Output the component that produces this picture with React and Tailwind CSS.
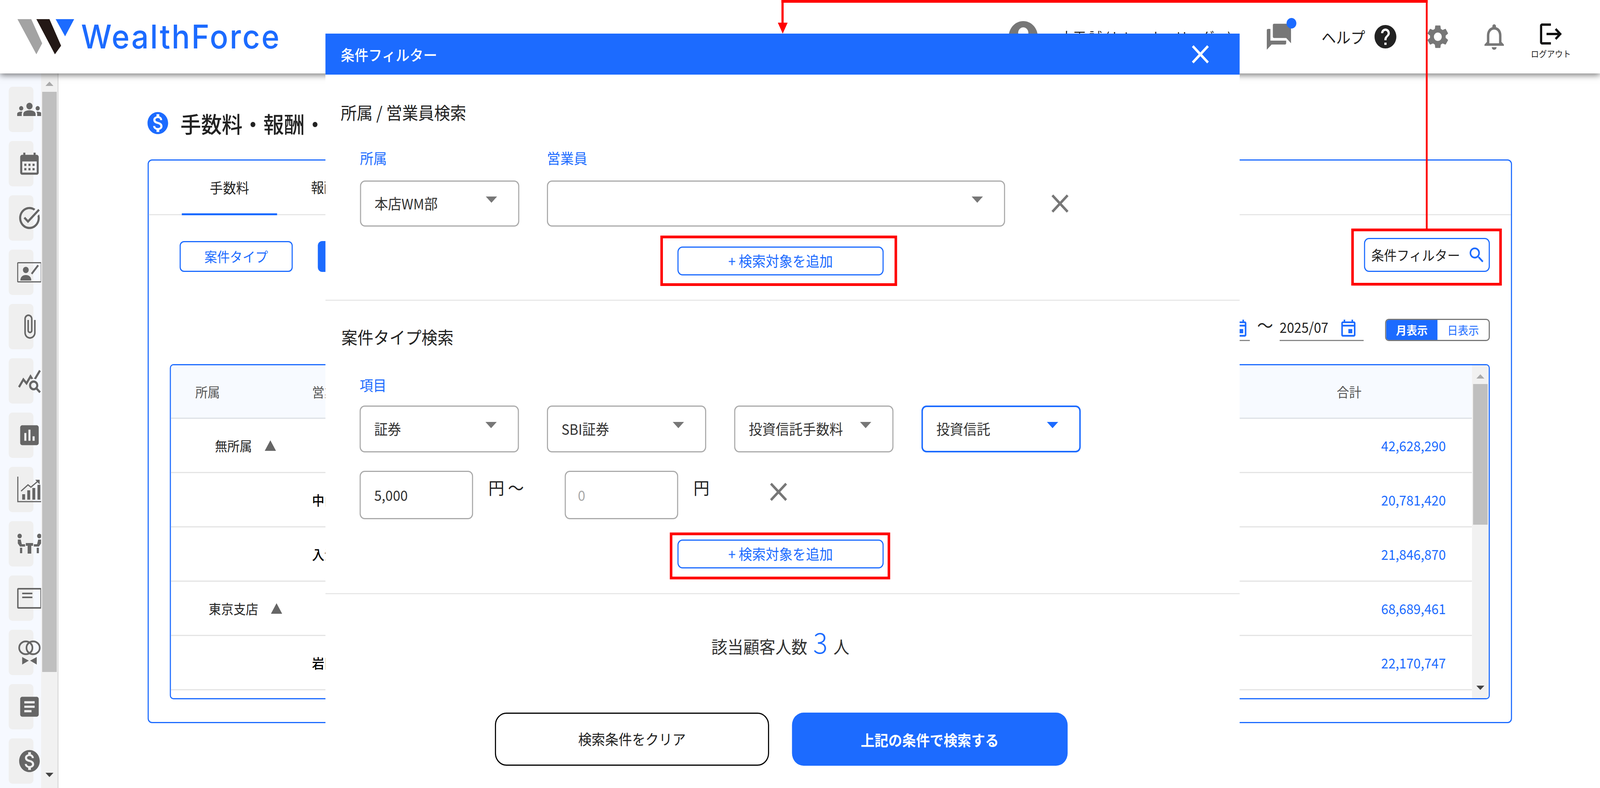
import React from "react";
import {
  MdGroups, MdCalendarMonth, MdOutlineTaskAlt, MdAttachFile, MdQueryStats, MdAssessment,
  MdArticle, MdMonetizationOn, MdClose, MdAccountCircle, MdForum, MdHelp, MdSettings,
  MdOutlineNotifications, MdLogout, MdSearch, MdOutlineEvent,
} from "react-icons/md";

const ContactPen = () => (
  <svg viewBox="0 0 68 52" className="w-[68px] h-[52px] flex-none" fill="none">
    <rect x="1.5" y="1.5" width="65" height="49" stroke="#666" strokeWidth="3" rx="2" />
    <circle cx="24" cy="20" r="8" fill="#666" />
    <path d="M9 47c0-10 7-14 15-14s15 4 15 14z" fill="#666" />
    <path d="M40 30 58 8" stroke="#666" strokeWidth="5" />
  </svg>
);
const TrendChart = () => (
  <svg viewBox="0 0 68 68" className="w-[68px] h-[68px] flex-none" fill="none">
    <path d="M2 1v64h66" stroke="#666" strokeWidth="3" />
    <path d="M14 60V46h8v14zM28 60V36h8v24zM42 60V30h8v30zM56 60V22h8v38z" fill="#666" />
    <path d="M11 38 30 22l8 6 20-16" stroke="#666" strokeWidth="3" />
    <path d="M50 9h12v12z" fill="#666" />
  </svg>
);
const Meeting = () => (
  <svg viewBox="0 0 68 52" className="w-[68px] h-[52px] flex-none" fill="#666">
    <circle cx="7" cy="6" r="6" />
    <circle cx="61" cy="6" r="6" />
    <path d="M2 15h8l3 12h9v6H8l-6-8zM66 15h-8l-3 12h-9v6h14l6-8z" />
    <path d="M24 24h20v7h-5v20H29V31h-5z" />
    <path d="M8 36h6v14H8zM54 36h6v14h-6z" />
  </svg>
);
const CardLines = () => (
  <svg viewBox="0 0 68 56" className="w-[68px] h-[56px] flex-none" fill="none" stroke="#666">
    <rect x="2" y="4" width="64" height="49" strokeWidth="4" rx="2" />
    <path d="M14 16h28M14 26h28" strokeWidth="4" />
  </svg>
);
const Rings = () => (
  <svg viewBox="0 0 68 70" className="w-[62px] h-[70px] flex-none" fill="none" stroke="#666">
    <ellipse cx="23" cy="22" rx="20" ry="18" strokeWidth="5" />
    <ellipse cx="45" cy="22" rx="20" ry="18" strokeWidth="5" />
    <path d="M12 48l20 10-20 11zM56 48 36 58l20 11z" fill="#666" stroke="none" />
  </svg>
);

const sideIcons = [
  <MdGroups size={68} className="flex-none" />,
  <MdCalendarMonth size={68} className="flex-none" />,
  <MdOutlineTaskAlt size={68} className="flex-none" />,
  <ContactPen />,
  <MdAttachFile size={68} className="flex-none" />,
  <MdQueryStats size={68} className="flex-none" />,
  <MdAssessment size={68} className="flex-none" />,
  <TrendChart />,
  <Meeting />,
  <CardLines />,
  <Rings />,
  <MdArticle size={68} className="flex-none" />,
  <MdMonetizationOn size={68} className="flex-none" />,
];

const rows = [
  { a: "無所属", pad: "pl-[121px]", b: "", v: "42,628,290", group: true },
  { a: "", b: "中山", v: "20,781,420" },
  { a: "", b: "入江", v: "21,846,870" },
  { a: "東京支店", pad: "pl-[104px]", b: "", v: "68,689,461", group: true },
  { a: "", b: "岩田", v: "22,170,747" },
];

const Tri = ({ up, color = "#777", className = "" }) => (
  <svg viewBox="0 0 32 16" preserveAspectRatio="none" className={`flex-none ${className}`}>
    <polygon points={up ? "16,0 32,16 0,16" : "0,0 32,0 16,16"} fill={color} />
  </svg>
);

const Select = ({ w = "w-[438px]", h = "h-[120px]", active, children }) => (
  <div
    className={`${w} ${h} flex-none flex items-center justify-between pl-[37px] pr-[58px] bg-white rounded-[14px] ${
      active ? "border-[4px] border-[#1c6bff]" : "border-[3px] border-[#aaaaaa]"
    }`}
  >
    <span className="text-[37px] text-[#333] whitespace-nowrap">{children}</span>
    <Tri color={active ? "#1c6bff" : "#777"} className="w-[31px] h-[16px] -mt-[20px]" />
  </div>
);

const AddButton = ({ ring }) => (
  <div className="relative ml-[968px] w-[567px] h-[74px] flex items-center justify-center rounded-[14px] border-[3px] border-[#1c6bff] text-[#1c6bff] text-[37px]">
    + 検索対象を追加
    <div className={`absolute border-[7px] border-[#ff0000] pointer-events-none ${ring}`} />
  </div>
);

const Line = ({ className }) => <div className={`absolute bg-[#ff0000] ${className}`} />;

export default function App() {
  return (
    <div className="relative w-[4400px] h-[2017px] overflow-hidden origin-top-left scale-x-[0.930909] bg-white text-[#222] font-['Noto_Sans_CJK_JP','Noto_Sans',sans-serif]">
      {/* header */}
      <header className="relative z-10 h-[188px] bg-white flex items-center pl-[48px] shadow-[0_4px_16px_rgba(0,0,0,0.55)]">
        <svg viewBox="0 0 156 90" className="w-[156px] h-[90px] flex-none">
          <polygon points="0,0 38,0 68,62 52,90" fill="#a3a3a3" />
          <polygon points="52,0 88,0 120,68 103,90" fill="#231815" />
          <polygon points="105,0 156,0 131,44" fill="#1c6bff" />
        </svg>
        <span className="ml-[19px] text-[#1c6bff] text-[84px] leading-none tracking-[4px] font-['Inter',sans-serif] font-medium">
          WealthForce
        </span>
        <div className="ml-auto flex items-center">
          <MdAccountCircle size={96} color="#777" className="flex-none" />
          <span className="ml-[53px] w-[482px] text-[36px] whitespace-nowrap">大平 誠 (トレーナーリーダー)</span>
          <div className="relative ml-[80px]">
            <MdForum size={80} color="#777" className="-scale-x-100" />
            <div className="absolute right-[-8px] top-[-8px] w-[27px] h-[27px] rounded-full bg-[#1c6bff]" />
          </div>
          <span className="ml-[77px] w-[126px] text-[40px] whitespace-nowrap">ヘルプ</span>
          <MdHelp size={72} color="#222" className="ml-[14px]" />
          <MdSettings size={72} color="#777" className="ml-[72px]" />
          <MdOutlineNotifications size={80} color="#777" className="ml-[79px]" />
          <div className="ml-[59px] mr-[78px] w-[114px] flex flex-col items-center mt-[14px]">
            <MdLogout size={72} color="#111" />
            <span className="text-[22px] leading-[30px] whitespace-nowrap mt-[-2px]">ログアウト</span>
          </div>
        </div>
      </header>

      <div className="flex h-[1829px]">
        {/* sidebar */}
        <aside className="w-[161px] flex-none flex border-r-[3px] border-[#dddddd] bg-[#f1f1f1]">
          <div className="w-[113px] flex-none bg-[#f6f9ff] pt-[34px] pl-[24px] flex flex-col gap-[23px] overflow-hidden">
            {sideIcons.map((ic, i) => (
              <div key={i} className="w-[68px] h-[116px] flex-none rounded-[10px] bg-[#efefef] flex items-center justify-center text-[#666] overflow-visible">
                <div className="w-[68px] flex-none flex justify-center ml-[46px]">{ic}</div>
              </div>
            ))}
          </div>
          <div className="flex-1 flex flex-col items-center">
            <Tri up color="#aaa" className="w-[22px] h-[11px] mt-[21px]" />
            <div className="w-[40px] h-[1485px] mt-[15px] bg-[#bfbfbf]" />
            <Tri color="#444" className="w-[22px] h-[11px] mt-[258px]" />
          </div>
        </aside>

        {/* main */}
        <main className="flex-1 pl-[245px] pt-[98px]">
          <div className="flex items-center h-[58px]">
            <MdMonetizationOn size={68} color="#1c6bff" className="-ml-[6px]" />
            <h1 className="ml-[28px] text-[57px] font-medium leading-none whitespace-nowrap text-[#222]">手数料・報酬・</h1>
          </div>
          <section className="mt-[64px] w-[3752px] h-[1443px] border-[3px] border-[#1c6bff] rounded-[12px] px-[58px]">
            <div className="-mx-[58px] h-[140px] border-b-[3px] border-[#e6e6e6] pl-[91px] flex items-end">
              <div className="w-[262px] h-[140px] -mb-[3px] border-b-[5px] border-[#1c6bff] flex items-center justify-center text-[36px]">手数料</div>
              <div className="ml-[93px] h-[140px] flex items-center text-[36px]">報酬</div>
            </div>
            <div className="mt-[58px] flex items-start">
              <div className="ml-[27px] mt-[8px] w-[311px] h-[79px] rounded-[12px] border-[3px] border-[#1c6bff] flex items-center justify-center text-[35px] text-[#1c6bff]">案件タイプ</div>
              <div className="ml-[69px] mt-[8px] w-[311px] h-[79px] rounded-[12px] bg-[#1c6bff]" />
              <div className="ml-auto w-[346px] h-[87px] rounded-[14px] border-[3px] border-[#1c6bff] flex items-center pl-[17px] text-[35px] whitespace-nowrap">
                条件フィルター
                <MdSearch size={52} color="#1c6bff" className="ml-[20px] flex-none" />
              </div>
            </div>
            <div className="mt-[120px] h-[57px] flex justify-end items-start">
              <div className="w-[29px] h-[57px] border-b-[3px] border-[#888] flex items-start">
                <MdOutlineEvent size={52} color="#1c6bff" className="-ml-[26px] flex-none -mt-[2px]" />
              </div>
              <span className="ml-[20px] w-[62px] text-[44px] leading-[30px]">〜</span>
              <div className="w-[231px] h-[57px] border-b-[3px] border-[#888] flex items-start justify-between pr-[16px]">
                <span className="text-[36px] leading-[40px]">2025/07</span>
                <MdOutlineEvent size={52} color="#1c6bff" className="-mt-[2px]" />
              </div>
              <div className="ml-[59px] w-[288px] h-[57px] rounded-[10px] border-[3px] border-[#777] overflow-hidden flex text-[29px]">
                <div className="w-[141px] bg-[#1c6bff] text-white font-bold flex items-center justify-center">月表示</div>
                <div className="flex-1 text-[#1c6bff] flex items-center justify-center">日表示</div>
              </div>
            </div>
            <div className="mt-[59px] h-[858px] border-[3px] border-[#1c6bff] rounded-[10px] overflow-hidden flex">
              <div className="flex-1 min-w-0 overflow-hidden">
                <div className="h-[137px] bg-[#f7faff] border-b-[3px] border-[#dde1e6] flex items-center text-[34px] text-[#555]">
                  <div className="w-[388px] pl-[67px]">所属</div>
                  <div className="flex-1">営業員</div>
                  <div className="w-[372px]">合計</div>
                </div>
                {rows.map((r, i) => (
                  <div key={i} className="h-[139px] border-b-[3px] border-[#e4e4e4] flex items-center text-[34px]">
                    <div className={`w-[388px] flex items-center ${r.pad || ""}`}>
                      {r.a && <span>{r.a}</span>}
                      {r.group && <Tri up color="#666" className="w-[31px] h-[27px] ml-[35px]" />}
                    </div>
                    <div className="flex-1 font-medium text-black">{r.b}</div>
                    <div className="w-[372px] pr-[72px] text-right text-[35.6px] text-[#1c6bff]">{r.v}</div>
                  </div>
                ))}
              </div>
              <div className="w-[46px] flex-none bg-[#f1f1f1] flex flex-col items-center">
                <Tri up color="#aaa" className="w-[22px] h-[11px] mt-[23px]" />
                <div className="w-[40px] h-[360px] mt-[14px] bg-[#bfbfbf]" />
                <Tri color="#444" className="w-[22px] h-[11px] mt-[412px]" />
              </div>
            </div>
          </section>
        </main>
      </div>

      {/* modal */}
      <div className="absolute left-[895px] top-[86px] bottom-0 w-[2514px] z-20 bg-white">
        <div className="h-[105px] bg-[#1c6bff] flex items-center justify-between pl-[42px] pr-[68px] text-white">
          <span className="text-[38px] font-medium">条件フィルター</span>
          <MdClose size={80} />
        </div>

        <div className="h-[579px] border-b-[3px] border-[#e8e8e8]">
          <h2 className="pl-[42px] pt-[66px] text-[44px] leading-[60px] font-normal text-[#222]">所属 / 営業員検索</h2>
          <div className="mt-[62px] pl-[95px] flex items-end">
            <div className="flex flex-col">
              <label className="text-[37px] leading-[50px] text-[#1c6bff] h-[50px]">所属</label>
              <div className="mt-[33px]"><Select h="h-[118px]">本店WM部</Select></div>
            </div>
            <div className="ml-[76px] flex flex-col">
              <label className="text-[37px] leading-[50px] text-[#1c6bff] h-[50px]">営業員</label>
              <div className="mt-[33px]"><Select w="w-[1260px]" h="h-[118px]" /></div>
            </div>
            <MdClose size={80} color="#777" className="ml-[111px] mb-[19px]" />
          </div>
          <div className="mt-[51px]"><AddButton ring="-left-[50px] -right-[40px] -top-[31px] -bottom-[30px]" /></div>
        </div>

        <div className="h-[751px] border-b-[3px] border-[#e8e8e8]">
          <h2 className="pl-[44px] pt-[62px] text-[44px] leading-[60px] font-normal text-[#222]">案件タイプ検索</h2>
          <div className="mt-[68px] pl-[94px]">
            <label className="block text-[37px] leading-[50px] text-[#1c6bff] h-[50px]">項目</label>
            <div className="mt-[28px] flex gap-[77px]">
              <Select>証券</Select>
              <Select>SBI証券</Select>
              <Select>投資信託手数料</Select>
              <Select active>投資信託</Select>
            </div>
            <div className="mt-[47px] flex items-start">
              <div className="w-[312px] h-[124px] rounded-[14px] border-[3px] border-[#aaa] flex items-center pl-[37px] text-[37px] text-[#333]">5,000</div>
              <span className="w-[252px] pl-[42px] text-[44px] leading-[84px] whitespace-nowrap">円 〜</span>
              <div className="w-[312px] h-[124px] rounded-[14px] border-[3px] border-[#aaa] flex items-center pl-[33px] text-[37px] text-[#aaa]">0</div>
              <span className="w-[236px] pl-[42px] text-[44px] leading-[84px]">円</span>
              <MdClose size={80} color="#777" className="mt-[14px]" />
            </div>
          </div>
          <div className="mt-[52px]"><AddButton ring="-left-[24px] -right-[21px] -top-[21px] -bottom-[31px]" /></div>
        </div>

        <div className="pt-[70px] pr-[12px] flex justify-center items-baseline text-[44px] leading-[100px] text-[#333]">
          <span>該当顧客人数</span>
          <span className="mx-[16px] text-[74px] font-light text-[#1c6bff]">3</span>
          <span>人</span>
        </div>
        <div className="mt-[120px] pl-[466px] flex gap-[63px]">
          <div className="w-[754px] h-[136px] rounded-[32px] border-[3px] border-black bg-white flex items-center justify-center text-[37px] font-normal text-[#222]">検索条件をクリア</div>
          <div className="w-[758px] h-[136px] rounded-[32px] bg-[#1c6bff] flex items-center justify-center text-[38px] font-bold text-white">上記の条件で検索する</div>
        </div>
      </div>

      {/* annotation lines */}
      <div className="absolute inset-0 z-30 pointer-events-none">
        <Line className="left-[2149px] top-0 w-[1777px] h-[7px]" />
        <Line className="left-[2149px] top-0 w-[6px] h-[60px]" />
        <svg viewBox="0 0 27 28" className="absolute left-[2139px] top-[58px] w-[27px] h-[28px]">
          <polygon points="0,0 27,0 13.5,28" fill="#ff0000" />
        </svg>
        <Line className="left-[3921px] top-0 w-[5px] h-[590px]" />
        <div className="absolute left-[3716px] top-[585px] w-[414px] h-[146px] border-[7px] border-[#ff0000]" />
      </div>
    </div>
  );
}
